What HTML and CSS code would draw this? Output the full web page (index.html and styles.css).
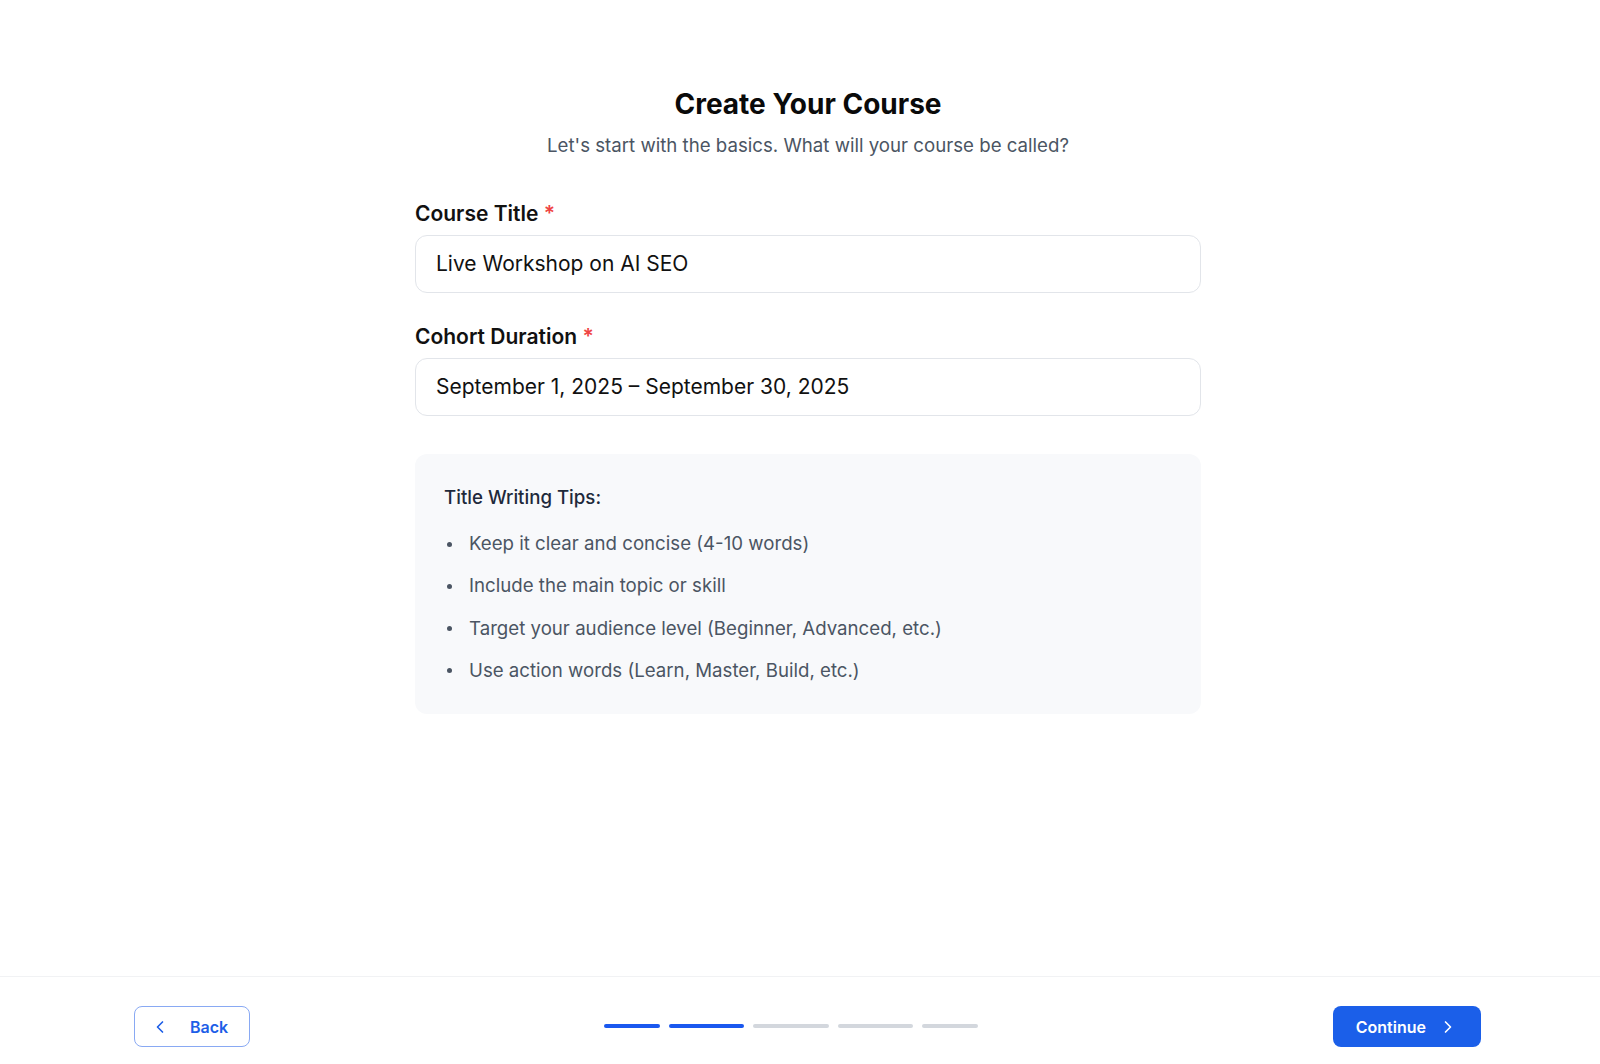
FILE: index.html
```html
<!DOCTYPE html>
<html lang="en">
<head>
<meta charset="utf-8">
<title>Create Your Course</title>
<link rel="stylesheet" href="styles.css">
</head>
<body>
<main class="main">
  <div class="container">
    <header class="header">
      <h1 class="title">Create Your Course</h1>
      <p class="subtitle">Let's start with the basics. What will your course be called?</p>
    </header>
    <form class="form">
      <div class="field">
        <label class="label" for="title">Course Title <span class="req">*</span></label>
        <div class="input" id="title">Live Workshop on AI SEO</div>
      </div>
      <div class="field field-2">
        <label class="label" for="dur">Cohort Duration <span class="req">*</span></label>
        <div class="input" id="dur">September 1, 2025 – September 30, 2025</div>
      </div>
    </form>
    <section class="tips">
      <h3 class="tips-title">Title Writing Tips:</h3>
      <ul class="tips-list">
        <li class="tip"><span class="dot"></span>Keep it clear and concise (4-10 words)</li>
        <li class="tip"><span class="dot"></span>Include the main topic or skill</li>
        <li class="tip"><span class="dot"></span>Target your audience level (Beginner, Advanced, etc.)</li>
        <li class="tip"><span class="dot"></span>Use action words (Learn, Master, Build, etc.)</li>
      </ul>
    </section>
  </div>
</main>
<footer class="footer">
  <button class="btn btn-back" type="button">
    <svg class="ico" viewBox="0 0 24 24" width="20" height="20" fill="none" stroke="currentColor" stroke-width="2" stroke-linecap="round" stroke-linejoin="round"><path d="m15 18-6-6 6-6"/></svg>
    <span>Back</span>
  </button>
  <div class="progress">
    <span class="bar bar-a w1"></span>
    <span class="bar bar-a w2"></span>
    <span class="bar w3"></span>
    <span class="bar w4"></span>
    <span class="bar w5"></span>
  </div>
  <button class="btn btn-next" type="button">
    <span>Continue</span>
    <svg class="ico" viewBox="0 0 24 24" width="20" height="20" fill="none" stroke="currentColor" stroke-width="2" stroke-linecap="round" stroke-linejoin="round"><path d="m9 18 6-6-6-6"/></svg>
  </button>
</footer>
</body>
</html>
```

FILE: styles.css
```css
* { box-sizing: border-box; }
html, body { margin: 0; padding: 0; }
body {
  font-family: Inter, "Noto Sans", "Liberation Sans", sans-serif;
  background: #ffffff;
  color: #111827;
  min-height: 100vh;
  display: flex;
  flex-direction: column;
}
.main {
  flex: 1;
  padding-left: 16px;
}
.container {
  max-width: 786px;
  margin: 0 auto;
}
.header {
  padding-top: 88px;
  text-align: center;
}
.title {
  margin: 0;
  font-size: 28px;
  line-height: 32px;
  font-weight: 700;
  color: #0a0a0a;
}
.subtitle {
  margin: 13.5px 0 0;
  font-size: 18.67px;
  line-height: 24px;
  color: #4b5563;
}
.form {
  margin-top: 42px;
}
.field-2 { margin-top: 30px; }
.label {
  display: block;
  font-size: 21px;
  line-height: 28px;
  font-weight: 600;
  color: #111111;
  margin-bottom: 7px;
}
.req { color: #ef4444; }
.input {
  height: 58px;
  border: 1px solid #e2e5ea;
  border-radius: 12px;
  padding: 0 20px;
  display: flex;
  align-items: center;
  font-size: 21px;
  color: #111111;
  background: #fff;
}
.tips {
  margin-top: 38.5px;
  background: #f8f9fb;
  border-radius: 12px;
  padding: 30px 28px 29px 29px;
}
.tips-title {
  margin: 0;
  font-size: 18.67px;
  line-height: 28px;
  font-weight: 500;
  color: #1e293b;
}
.tips-list {
  list-style: none;
  margin: 18px 0 0;
  padding: 0;
  display: flex;
  flex-direction: column;
  gap: 14.3px;
}
.tip {
  display: flex;
  align-items: center;
  font-size: 18.67px;
  line-height: 28px;
  color: #4b5563;
}
.dot {
  width: 5px;
  height: 5px;
  border-radius: 50%;
  background: #4b5563;
  margin-left: 3px;
  margin-right: 17px;
  flex: none;
}
.footer {
  height: 88px;
  border-top: 1px solid #f1f2f4;
  padding: 29px 119px 0 134px;
  display: flex;
  justify-content: space-between;
  align-items: flex-start;
}
.btn {
  height: 41px;
  display: flex;
  align-items: center;
  font-family: inherit;
  font-size: 16px;
  font-weight: 600;
  border-radius: 8px;
  cursor: pointer;
}
.ico { display: block; flex: none; }
.btn-back {
  background: #fff;
  border: 1px solid #89a9f3;
  color: #1d5ee7;
  padding: 0 21px 0 15px;
  gap: 20px;
}
.btn-next {
  background: #1b5fe9;
  border: none;
  color: #fff;
  padding: 0 23px;
  gap: 12px;
}
.progress {
  display: flex;
  gap: 9px;
  margin-top: 18px;
}
.bar {
  height: 4px;
  border-radius: 2px;
  background: #d3d7dd;
}
.bar-a { background: #1a58ef; }
.w1 { width: 56px; }
.w2 { width: 75px; }
.w3 { width: 76px; }
.w4 { width: 75px; }
.w5 { width: 56px; }
```
